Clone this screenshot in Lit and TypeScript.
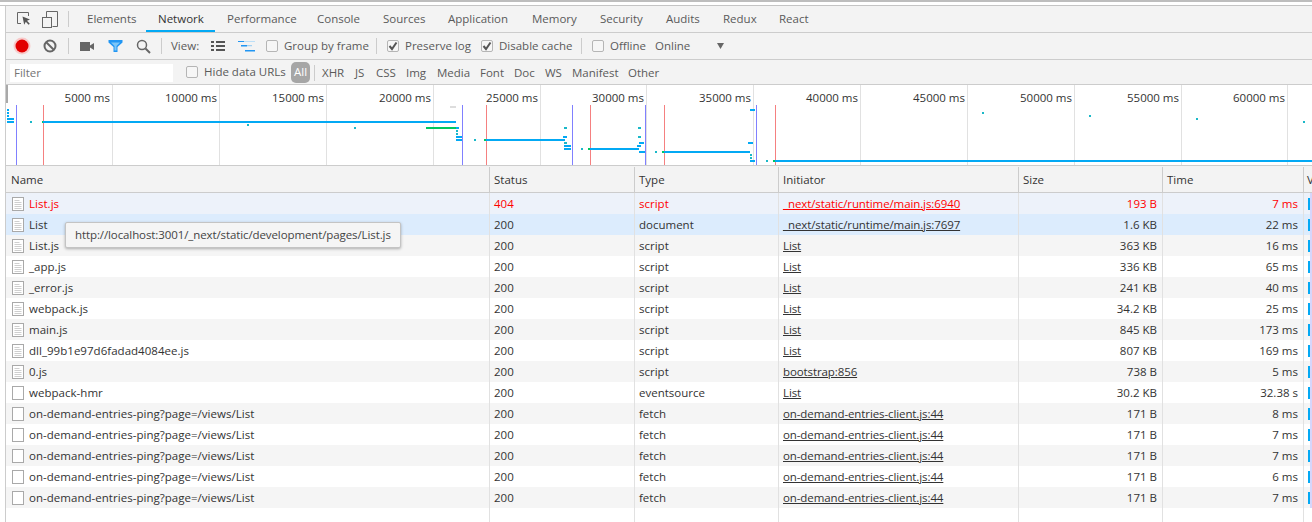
import { LitElement, html, css, svg } from "lit";
import { customElement } from "lit/decorators.js";

type Row = { name: string; status: string; type: string; init: string; size: string; time: string; icon: "doc" | "blank"; err?: boolean; hover?: boolean };

const ondemand = (size: string, time: string): Row => ({ name: "on-demand-entries-ping?page=/views/List", status: "200", type: "fetch", init: "on-demand-entries-client.js:44", size, time, icon: "blank" });

const ROWS: Row[] = [
  { name: "List.js", status: "404", type: "script", init: "_next/static/runtime/main.js:6940", size: "193 B", time: "7 ms", icon: "doc", err: true },
  { name: "List", status: "200", type: "document", init: "_next/static/runtime/main.js:7697", size: "1.6 KB", time: "22 ms", icon: "doc", hover: true },
  { name: "List.js", status: "200", type: "script", init: "List", size: "363 KB", time: "16 ms", icon: "doc" },
  { name: "_app.js", status: "200", type: "script", init: "List", size: "336 KB", time: "65 ms", icon: "doc" },
  { name: "_error.js", status: "200", type: "script", init: "List", size: "241 KB", time: "40 ms", icon: "doc" },
  { name: "webpack.js", status: "200", type: "script", init: "List", size: "34.2 KB", time: "25 ms", icon: "doc" },
  { name: "main.js", status: "200", type: "script", init: "List", size: "845 KB", time: "173 ms", icon: "doc" },
  { name: "dll_99b1e97d6fadad4084ee.js", status: "200", type: "script", init: "List", size: "807 KB", time: "169 ms", icon: "doc" },
  { name: "0.js", status: "200", type: "script", init: "bootstrap:856", size: "738 B", time: "5 ms", icon: "doc" },
  { name: "webpack-hmr", status: "200", type: "eventsource", init: "List", size: "30.2 KB", time: "32.38 s", icon: "blank" },
  ondemand("171 B", "8 ms"),
  ondemand("171 B", "7 ms"),
  ondemand("171 B", "7 ms"),
  ondemand("171 B", "6 ms"),
  ondemand("171 B", "7 ms"),
];

const TABS = ["Elements", "Network", "Performance", "Console", "Sources", "Application", "Memory", "Security", "Audits", "Redux", "React"];
const TYPES = ["XHR", "JS", "CSS", "Img", "Media", "Font", "Doc", "WS", "Manifest", "Other"];
const GRID = [112, 219, 326, 433, 540, 646, 753, 860, 967, 1074, 1181, 1287];
const BLUE = "#03a9f4";
const TEAL = "#1ab8c8";
const GREEN = "#00c860";
// x, y, width, height, colour: the marks of the overview canvas, in page coordinates
const BARS: [number, number, number, number, string][] = [
  [7, 109, 2, 2, BLUE], [7, 112, 2, 2, BLUE], [7, 115, 2, 2, BLUE], [7, 118, 7, 2, BLUE], [7, 121, 7, 2, BLUE],
  [30, 121, 2, 2, TEAL], [42, 121, 1, 2, GREEN], [43, 121, 413, 2, BLUE], [247, 124, 2, 2, TEAL], [354, 127, 2, 2, TEAL],
  [426, 127, 30, 2, GREEN], [450, 106, 6, 2, "#dddddd"],
  [456, 127, 3, 2, BLUE], [456, 130, 2, 2, TEAL], [456, 133, 2, 2, TEAL], [456, 136, 6, 2, BLUE], [456, 139, 6, 2, BLUE],
  [474, 139, 2, 2, TEAL], [484, 139, 2, 2, GREEN], [486, 139, 79, 2, BLUE],
  [564, 127, 3, 2, TEAL], [563, 136, 4, 2, BLUE], [564, 142, 3, 2, TEAL], [564, 145, 7, 2, BLUE], [564, 148, 7, 2, BLUE],
  [581, 148, 2, 2, TEAL], [588, 148, 2, 2, GREEN], [590, 148, 49, 2, BLUE],
  [638, 127, 3, 2, TEAL], [638, 136, 3, 2, TEAL], [639, 142, 5, 2, BLUE], [637, 145, 4, 2, BLUE], [639, 151, 6, 2, BLUE],
  [655, 151, 2, 2, TEAL], [662, 151, 2, 2, GREEN], [664, 151, 86, 2, BLUE],
  [750, 109, 5, 2, BLUE], [748, 142, 5, 2, BLUE], [750, 154, 2, 2, TEAL], [750, 157, 2, 2, TEAL], [750, 160, 5, 2, BLUE],
  [766, 160, 2, 2, TEAL], [773, 160, 2, 2, GREEN], [775, 160, 537, 2, BLUE],
  [982, 112, 2, 2, TEAL], [1089, 115, 2, 2, TEAL], [1196, 118, 2, 2, TEAL], [1303, 121, 2, 2, TEAL],
];
const LOAD_LINES = [16, 462, 572, 645, 756];
const DOM_LINES = [43, 486, 590, 664, 775];

const docIcon = html`<svg class="fileicon" width="12" height="14" viewBox="0 0 12 14"><rect x=".5" y=".5" width="11" height="13" fill="#fff" stroke="#a9a9a9"/><path d="M2.500 3.500h5M2.500 5.500h7M2.500 7.500h7M2.500 9.500h7M2.500 11.500h7" stroke="#cfcfcf" fill="none"/></svg>`;
const blankIcon = html`<svg class="fileicon" width="12" height="14" viewBox="0 0 12 14"><rect x=".5" y=".5" width="11" height="13" fill="#fff" stroke="#a9a9a9"/></svg>`;

@customElement("app-root")
export class AppRoot extends LitElement {
  static styles = css`
    :host { display: block; width: 1312px; height: 522px; overflow: hidden; background: #fff; color: #333;
      font-family: "Open Sans", "Noto Sans", sans-serif; font-size: 11.5px; line-height: 16px; }
    * { box-sizing: border-box; }
    .page { display: flex; flex-direction: column; height: 522px; position: relative; }
    .top { height: 6px; flex: none; border-top: 2px solid #bdbdbd; border-bottom: 1px solid #c4c4c4; }
    .panel { flex: 1; min-height: 0; margin-left: 5px; border-left: 1px solid #ccc; display: flex; flex-direction: column; }
    .tabs, .toolbar, .filters { flex: none; background: #f3f3f3; border-bottom: 1px solid #ccc; display: grid; align-items: center; color: #5a5a5a; }
    .tabs { height: 27px; grid-template-columns: 35px 17px 17px 71px 69px 90px 66px 65px 84px 68px 66px 57px 56px 60px; }
    .tab { height: 26px; padding-left: 12px; display: flex; align-items: center; }
    .tab.on { color: #333; box-shadow: inset 0 -2px 0 #03a9f4; }
    .cell { display: flex; align-items: center; justify-content: center; }
    .div { width: 1px; height: 16px; background: #ccc; justify-self: center; }
    .div.tabdiv { justify-self: start; margin-left: 10px; }
    .toolbar { height: 27px; padding-left: 2px; grid-template-columns: 28px 28px 9px 28px 28px 28px 9px 39px 26px 30px 111px 9px 95px 101px 9px 62px 62px 7px 7px; }
    .text { padding-left: 5px; white-space: nowrap; }
    .check { display: flex; align-items: center; white-space: nowrap; }
    .box { width: 12px; height: 12px; flex: none; margin-right: 6px; border: 1px solid #b5b5b5; border-radius: 2px; background: #f6f6f6; display: flex; }
    .pl5 { padding-left: 5px; }
    .pl6 { padding-left: 6px; }
    .pl7 { padding-left: 7px; }
    .arrow { display: block; }
    .filters { height: 25px; padding-left: 4px; padding-top: 1px; grid-template-columns: 163px 118px 19px 12px 33px 21px 30px 31px 43px 34px 31px 27px 56px 60px; }
    .input { height: 18px; background: #fff; color: #757575; padding-left: 4px; display: flex; align-items: center; }
    .hide { padding-left: 13px; margin-top: -2px; }
    .all { height: 21px; margin-top: -1px; background: #a6a6a6; color: #fff; border-radius: 5px; display: flex; align-items: center; justify-content: center; }
    .div.f { justify-self: start; margin-left: 4px; }
    .overview { height: 81px; flex: none; border-bottom: 1px solid #ccc; background: #fff; }
    .overview svg { display: block; }
    .overview text { font-size: 11.5px; fill: #333; font-family: "Open Sans", "Noto Sans", sans-serif; }
    .table { flex: 1; min-height: 0; display: flex; flex-direction: column; }
    .row { display: grid; grid-template-columns: 484px 145px 144px 240px 144px 141px 1fr; height: 21px; flex: none; background: #fff; }
    .row:nth-child(even) { background: #f5f5f5; }
    .row.err { background: #edf2fa; color: #f00; }
    .row.hover { background: #dcecfd; }
    .row > div { border-right: 1px solid #e1e1e1; padding: 0 4px; display: flex; align-items: center; white-space: nowrap; overflow: hidden; min-width: 0; }
    .row > div:last-child { border-right: 0; padding: 0; }
    .row .name { padding-left: 6px; gap: 5px; }
    .row .name span { letter-spacing: 0.03px; }
    .row .r { justify-content: flex-end; padding-right: 5px; }
    .row a { color: inherit; text-decoration: underline; letter-spacing: -0.1px; }
    .head.row { height: 27px; background: #f3f3f3; border-bottom: 1px solid #ccc; padding-top: 1px; }
    .head.row > div { border-right: 1px solid #ccc; }
    .head.row > div:last-child { border-right: 0; padding-left: 3px; }
    .head .name { padding-left: 5px; }
    .fileicon { flex: none; }
    .wf { width: 100%; height: 100%; padding-left: 4px; }
    .wfbar { display: block; width: 2px; height: 12px; background: #03a9f4; margin-top: 5px; }
    .rest { flex: 1; display: grid; grid-template-columns: 484px 145px 144px 240px 144px 141px 1fr; }
    .rest div { border-right: 1px solid #e1e1e1; }
    .rest div:last-child { border-right: 0; }
    .tip { position: absolute; left: 65px; top: 222px; width: 336px; height: 26px; padding-left: 9px; display: flex; align-items: center; white-space: nowrap;
      background: #f5f5f5; border: 1px solid #c4c4c4; border-radius: 2px; box-shadow: 0 1px 3px rgba(0,0,0,.3); color: #444; letter-spacing: -0.1px; }
    .band { position: absolute; left: 1310px; top: 193px; width: 2px; height: 315px; background: #d6d6fb; }
  `;

  private checkbox(label: string, on: boolean, cls = "") {
    return html`<div class="check ${cls}"><span class="box">${on
      ? html`<svg width="10" height="10" viewBox="0 0 10 10"><path d="M1.500 5l2.500 3 4.500-6.500" fill="none" stroke="#555" stroke-width="2"/></svg>`
      : ""}</span>${label}</div>`;
  }

  private overview() {
    return html`<svg width="1306" height="80" viewBox="6 85 1306 80">
      ${GRID.map((x) => svg`<rect x=${x} y="85" width="1" height="80" fill="#e1e1e1"/>`)}
      ${GRID.map((x, i) => svg`<text x=${x - 2} y="102" text-anchor="end">${(i + 1) * 5000} ms</text>`)}
      <rect x="6" y="85" width="2" height="18" fill="#a9a9a9"/>
      ${LOAD_LINES.map((x) => svg`<rect x=${x} y="105" width="1" height="60" fill="#8080ff"/>`)}
      ${DOM_LINES.map((x) => svg`<rect x=${x} y="105" width="1" height="60" fill="#f58080"/>`)}
      ${BARS.map(([x, y, w, h, c]) => svg`<rect x=${x} y=${y} width=${w} height=${h} fill=${c}/>`)}
    </svg>`;
  }

  render() {
    return html`<div class="page">
      <div class="top"></div>
      <div class="panel">
        <div class="tabs">
          <div class="cell"><svg width="15" height="16" viewBox="0 0 15 16"><path d="M12.500 5V1.500h-11v11H5" fill="none" stroke="#666" stroke-width="1"/><path d="M6.500 5.500l7.500 3-3 1.200 2.800 3-1.200 1.100-2.800-3-1.600 2.900z" fill="#555"/></svg></div>
          <div class="cell"><svg width="16" height="17" viewBox="0 0 16 17"><path d="M4.500 6V.5h11v15h-5" fill="none" stroke="#666"/><rect x=".5" y="6.500" width="9" height="10" fill="none" stroke="#666"/></svg></div>
          <div class="div tabdiv"></div>
          ${TABS.map((t) => html`<div class="tab ${t === "Network" ? "on" : ""}">${t}</div>`)}
        </div>

        <div class="toolbar">
          <div class="cell"><svg width="20" height="20" viewBox="0 0 20 20"><circle cx="10" cy="10" r="8.500" fill="#f8caca"/><circle cx="10" cy="10" r="6.500" fill="#e20000"/></svg></div>
          <div class="cell"><svg width="14" height="14" viewBox="0 0 14 14"><circle cx="7" cy="7" r="5.500" fill="none" stroke="#666" stroke-width="2"/><path d="M3 3l8 8" stroke="#666" stroke-width="2"/></svg></div>
          <div class="div"></div>
          <div class="cell"><svg width="14" height="9" viewBox="0 0 14 9"><path d="M0 0h10v9H0zM10 3.500L14 1v7l-4-2.500z" fill="#666"/></svg></div>
          <div class="cell"><svg width="15" height="12" viewBox="0 0 15 12"><path d="M.5 0h14v2.500L9.500 7v5h-4V7L.5 2.500z" fill="#2196f3"/><path d="M3 2.500h9L8.500 6v4.500h-2V6z" fill="#7cc6f8"/></svg></div>
          <div class="cell"><svg width="15" height="15" viewBox="0 0 15 15"><circle cx="6" cy="6" r="4.500" fill="none" stroke="#666" stroke-width="1.500"/><path d="M9.500 9.500L14 14" stroke="#666" stroke-width="2"/></svg></div>
          <div class="div"></div>
          <div class="text">View:</div>
          <div class="cell"><svg width="14" height="10" viewBox="0 0 14 10"><path d="M0 0h3v2H0zM5 0h9v2H5zM0 4h3v2H0zM5 4h9v2H5zM0 8h3v2H0zM5 8h9v2H5z" fill="#555"/></svg></div>
          <div class="cell"><svg width="17" height="11" viewBox="0 0 17 11"><path d="M0 0h6v1H0z" fill="#2196f3"/><path d="M6 0h11v1H6z" fill="#bcdff7"/><path d="M3 4h6v1.500H3zM7 9h6v1.500H7z" fill="#2196f3"/><path d="M9 4.200h5v1H9z" fill="#8fc9f2"/><path d="M13 9h4v1.500h-4z" fill="#2196f3"/></svg></div>
          ${this.checkbox("Group by frame", false, "pl5")}
          <div class="div"></div>
          ${this.checkbox("Preserve log", true, "pl6")}
          ${this.checkbox("Disable cache", true, "pl5")}
          <div class="div"></div>
          ${this.checkbox("Offline", false, "pl6")}
          <div class="pl7">Online</div>
          <div></div>
          <svg class="arrow" width="7" height="6" viewBox="0 0 7 6"><path d="M0 0h7L3.500 6z" fill="#666"/></svg>
        </div>

        <div class="filters">
          <div class="input">Filter</div>
          ${this.checkbox("Hide data URLs", false, "hide")}
          <div class="all">All</div>
          <div class="div f"></div>
          ${TYPES.map((t) => html`<div>${t}</div>`)}
        </div>

        <div class="overview">${this.overview()}</div>

        <div class="table">
          <div class="row head">
            <div class="name">Name</div><div>Status</div><div>Type</div><div>Initiator</div><div>Size</div><div>Time</div><div>V</div>
          </div>
          ${ROWS.map((r) => html`<div class="row ${r.err ? "err" : ""} ${r.hover ? "hover" : ""}">
            <div class="name">${r.icon === "doc" ? docIcon : blankIcon}<span>${r.name}</span></div>
            <div>${r.status}</div>
            <div>${r.type}</div>
            <div><a>${r.init}</a></div>
            <div class="r">${r.size}</div>
            <div class="r">${r.time}</div>
            <div><span class="wf"><span class="wfbar"></span></span></div>
          </div>`)}
          <div class="rest"><div></div><div></div><div></div><div></div><div></div><div></div><div></div></div>
        </div>
      </div>
      <div class="band"></div>
      <div class="tip">http://localhost:3001/_next/static/development/pages/List.js</div>
    </div>`;
  }
}
